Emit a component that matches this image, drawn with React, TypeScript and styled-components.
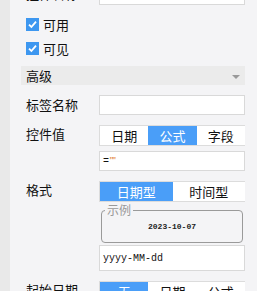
import styled, { createGlobalStyle } from 'styled-components';

const GlobalStyle = createGlobalStyle`
  html, body {
    margin: 0;
    padding: 0;
    background: #f4f4f6;
    overflow: hidden;
  }
  body {
    font-family: "Noto Sans CJK SC", "Noto Sans", sans-serif;
    font-size: 13px;
    color: #111;
  }
`;

type SegProps = { $active?: boolean };

const Segmented = ({ items, active }: { items: string[]; active: number }) => (
  <SegGroup>
    {items.map((item, i) => (
      <Segment key={item} $active={i === active}>
        {item}
      </Segment>
    ))}
  </SegGroup>
);

const CheckRow = ({ label }: { label: string }) => (
  <CheckLine>
    <CheckBox>
      <svg width="11" height="11" viewBox="0 0 11 11">
        <path d="M2 5.6 L4.4 8 L9 2.6" fill="none" stroke="#fff" strokeWidth="1.8" />
      </svg>
    </CheckBox>
    <span>{label}</span>
  </CheckLine>
);

export default function App() {
  return (
    <Page>
      <GlobalStyle />
      <SideStrip />
      <Panel>
        <Row>
          <Label>控件名称</Label>
          <Field>
            <TextInput />
          </Field>
        </Row>
        <Checks>
          <CheckRow label="可用" />
          <CheckRow label="可见" />
        </Checks>
        <SectionBar>
          <span>高级</span>
          <Caret />
        </SectionBar>
        <Row>
          <Label $center>标签名称</Label>
          <Field>
            <TextInput />
          </Field>
        </Row>
        <Row>
          <Label>控件值</Label>
          <Field $gap={5}>
            <Segmented items={['日期', '公式', '字段']} active={1} />
            <TextInput>
              <Code>
                =<Quote>""</Quote>
              </Code>
            </TextInput>
          </Field>
        </Row>
        <Row>
          <Label>格式</Label>
          <Field $gap={2}>
            <Segmented items={['日期型', '时间型']} active={0} />
            <Sample>
              <legend>示例</legend>
              <SampleText>2023-10-07</SampleText>
            </Sample>
            <TextInput $tall>
              <Code>yyyy-MM-dd</Code>
            </TextInput>
          </Field>
        </Row>
        <Row>
          <Label>起始日期</Label>
          <Field>
            <Segmented items={['无', '日期', '公式']} active={0} />
          </Field>
        </Row>
      </Panel>
    </Page>
  );
}

const Page = styled.div`
  display: flex;
  width: 257px;
  height: 291px;
  overflow: hidden;
`;

const SideStrip = styled.div`
  width: 10px;
  flex-shrink: 0;
  background: #e9e9e9;
`;

const Panel = styled.div`
  width: 224px;
  margin: -15px 0 0 11px;
  display: flex;
  flex-direction: column;
  gap: 10px;
`;

const Row = styled.div`
  display: flex;
  align-items: flex-start;
`;

const Label = styled.div<{ $center?: boolean }>`
  width: 73px;
  padding-left: 5px;
  flex-shrink: 0;
  line-height: 18px;
  margin-top: ${(p) => (p.$center ? '1px' : '0')};
  white-space: nowrap;
`;

const Field = styled.div<{ $gap?: number }>`
  flex: 1;
  display: flex;
  flex-direction: column;
  gap: ${(p) => p.$gap ?? 0}px;
`;

const TextInput = styled.div<{ $tall?: boolean }>`
  box-sizing: border-box;
  height: ${(p) => (p.$tall ? 26 : 20)}px;
  background: #fff;
  border: 1px solid #d9d9d9;
  display: flex;
  align-items: center;
  padding-left: 3px;
`;

const Checks = styled.div`
  display: flex;
  flex-direction: column;
  margin: -3px 0 -4px;
`;

const CheckLine = styled.label`
  display: flex;
  align-items: center;
  gap: 4px;
  height: 24px;
  padding-left: 5px;
  font-size: 13px;
`;

const CheckBox = styled.span`
  width: 13px;
  height: 13px;
  background: #3d97f0;
  display: flex;
  align-items: center;
  justify-content: center;
`;

const SectionBar = styled.div`
  height: 20px;
  background: #ebebeb;
  display: flex;
  align-items: center;
  justify-content: space-between;
  padding: 0 5px;
`;

const Caret = styled.span`
  width: 0;
  height: 0;
  border-left: 4px solid transparent;
  border-right: 4px solid transparent;
  border-top: 4px solid #999;
  margin-top: 2px;
`;

const SegGroup = styled.div`
  display: flex;
  height: 21px;
  box-sizing: border-box;
  border: 1px solid #dcdcdc;
  border-right: none;
  background: #fff;
`;

const Segment = styled.div<SegProps>`
  flex: 1;
  display: flex;
  align-items: center;
  justify-content: center;
  font-size: 13px;
  background: ${(p) => (p.$active ? '#4a9ef8' : '#fff')};
  color: ${(p) => (p.$active ? '#fff' : '#111')};
`;

const Code = styled.span`
  font-family: "Liberation Mono", "DejaVu Sans Mono", monospace;
  font-size: 10px;
  color: #111;
`;

const Quote = styled.span`
  color: #e07b24;
  font-size: 8px;
  letter-spacing: -2px;
  vertical-align: 2px;
`;

const Sample = styled.fieldset`
  margin: 0 2px;
  padding: 0 0 6px;
  border: 1px solid #9a9a9a;
  border-radius: 4px;
  height: 39px;
  box-sizing: border-box;
  display: flex;
  justify-content: center;

  legend {
    color: #999;
    font-size: 12px;
    line-height: 12px;
    padding: 0 2px;
    margin-left: 3px;
  }
`;

const SampleText = styled.div`
  font-family: "Liberation Mono", "DejaVu Sans Mono", monospace;
  font-size: 8px;
  font-weight: bold;
  color: #222;
  margin-top: 6px;
`;
